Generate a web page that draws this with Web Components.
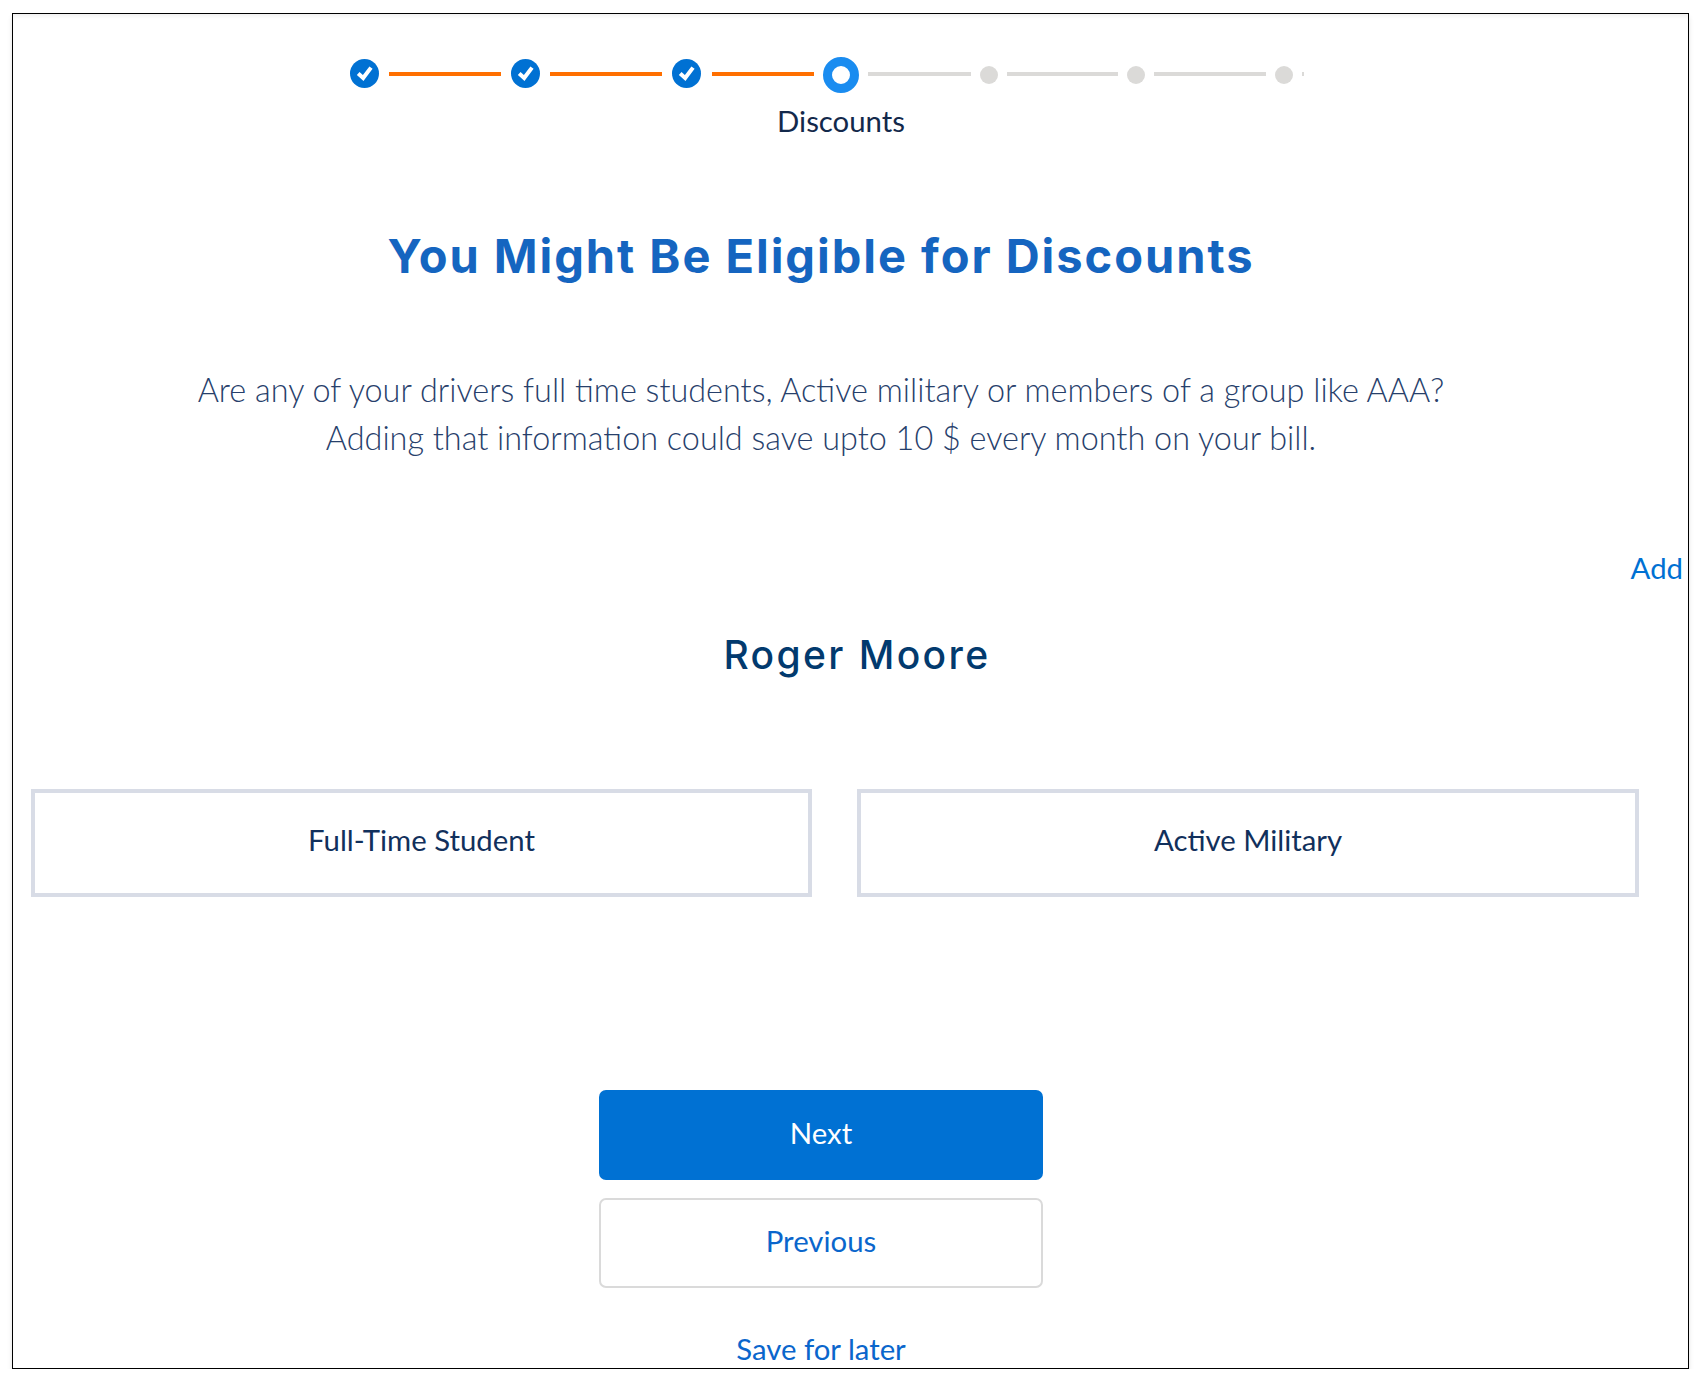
<!DOCTYPE html>
<html lang="en"><head><meta charset="utf-8"><title>Discounts</title>
<style>
html,body{margin:0;padding:0;background:#fff;font-family:"Lato","Liberation Sans",sans-serif;}
</style></head><body>
<x-frame>
  <x-stepper>
    <x-done></x-done><x-bar w="112" c="#ff6f00" ml="10" mr="10"></x-bar>
    <x-done></x-done><x-bar w="112" c="#ff6f00" ml="10" mr="10"></x-bar>
    <x-done></x-done><x-bar w="102" c="#ff6f00" ml="11" mr="9"></x-bar>
    <x-active></x-active><x-bar w="103" c="#dbdad8" ml="9" mr="9"></x-bar>
    <x-dot></x-dot><x-bar w="111" c="#dbdad8" ml="9" mr="9"></x-bar>
    <x-dot></x-dot><x-bar w="112" c="#dbdad8" ml="9" mr="9"></x-bar>
    <x-dot></x-dot><x-bar w="2" c="#dbdad8" ml="9" mr="0"></x-bar>
    <span slot="label">Discounts</span>
  </x-stepper>
  <x-intro>
    <span slot="title">You Might Be Eligible for Discounts</span>
    Are any of your drivers full time students, Active military or members of a group like AAA?<br>Adding that information could save upto 10 $ every month on your bill.
  </x-intro>
  <x-driver name="Roger Moore">
    <x-option>Full-Time Student</x-option>
    <x-option>Active Military</x-option>
  </x-driver>
  <x-actions>
    <x-button kind="primary">Next</x-button>
    <x-button kind="secondary">Previous</x-button>
    <span slot="link">Save for later</span>
  </x-actions>
</x-frame>
<script>
function def(name,html,init){
  customElements.define(name,class extends HTMLElement{
    constructor(){super();this.attachShadow({mode:'open'}).innerHTML=html;}
    connectedCallback(){if(init)init(this);}
  });
}
def('x-frame',`<style>
:host{display:block;box-sizing:border-box;width:1677px;height:1356px;margin:13px 0 0 12px;border:1px solid #000;background:#fff;overflow:hidden;
box-shadow:0 4px 5px rgba(0,0,0,.11),inset 0 5px 5px -3px rgba(0,0,0,.07);}
</style><slot></slot>`);
def('x-stepper',`<style>
:host{display:block;padding-top:43px;color:#13294b;}
.row{display:flex;align-items:center;height:36px;padding-left:337px;}
.label{width:1656px;text-align:center;font-size:29.33px;line-height:34px;margin-top:11px;}
</style><div class="row"><slot></slot></div><div class="label"><slot name="label"></slot></div>`);
def('x-done',`<style>:host{display:block;width:29px;height:29px;margin-bottom:3px;}svg{display:block}</style>
<svg width="29" height="29" viewBox="0 0 29 29"><circle cx="14.5" cy="14.5" r="14.5" fill="#0071d3"/><path d="M8.2 14.5l5 4.5 7.8-10.4" fill="none" stroke="#fff" stroke-width="4"/></svg>`);
def('x-active',`<style>:host{display:block;box-sizing:border-box;width:36px;height:36px;border:9px solid #1a8cf0;border-radius:50%;background:#fff;}</style>`);
def('x-dot',`<style>:host{display:block;width:18px;height:18px;border-radius:50%;background:#dbdad8;}</style>`);
def('x-bar',`<style>:host{display:block;height:4px;margin-bottom:2px;flex:none;}</style>`,el=>{
  el.style.width=el.getAttribute('w')+'px';el.style.background=el.getAttribute('c');
  el.style.marginLeft=el.getAttribute('ml')+'px';el.style.marginRight=el.getAttribute('mr')+'px';
});
def('x-intro',`<style>
:host{display:block;width:1616px;text-align:center;}
h1{margin:88px 0 0;font:700 47px/60px "Inter","Open Sans",sans-serif;color:#1565c0;letter-spacing:1.96px;}
p{margin:80px 0 0;font:300 32.4px/48px "Lato",sans-serif;color:#27406b;}
</style><h1><slot name="title"></slot></h1><p><slot></slot></p>`);
def('x-driver',`<style>
:host{display:block;padding:0 5px 0 18px;}
.add{text-align:right;font-size:29.33px;line-height:36px;color:#0071d3;margin-top:88px;}
h2{margin:44px 0 0;text-align:center;font:500 39px/50px "Inter","Open Sans",sans-serif;letter-spacing:2.4px;color:#023a6e;}
.opts{display:flex;gap:45px;margin-top:109px;}
</style><div class="add">Add</div><h2 id="n"></h2><div class="opts"><slot></slot></div>`,el=>{
  el.shadowRoot.getElementById('n').textContent=el.getAttribute('name');
});
def('x-option',`<style>
:host{display:flex;flex:none;width:781px;box-sizing:border-box;height:108px;border:4px solid #d8dce6;align-items:center;justify-content:center;font-size:29.33px;color:#11305c;padding-bottom:8px;}
:host(:last-child){width:782px;}
</style><slot></slot>`);
def('x-actions',`<style>
:host{display:flex;flex-direction:column;align-items:center;gap:18px;width:1616px;margin-top:193px;}
.link{font-size:29.33px;line-height:34px;color:#0a66cc;margin-top:26px;}
</style><slot></slot><div class="link"><slot name="link"></slot></div>`);
def('x-button',`<style>
:host{display:flex;box-sizing:border-box;width:444px;height:90px;align-items:center;justify-content:center;font-size:29.33px;border-radius:7px;padding-bottom:6px;}
:host([kind=primary]){background:#0071d3;color:#fff;}
:host([kind=secondary]){border:2px solid #dadada;color:#0a66cc;background:#fff;}
</style><slot></slot>`);
</script>
</body></html>
